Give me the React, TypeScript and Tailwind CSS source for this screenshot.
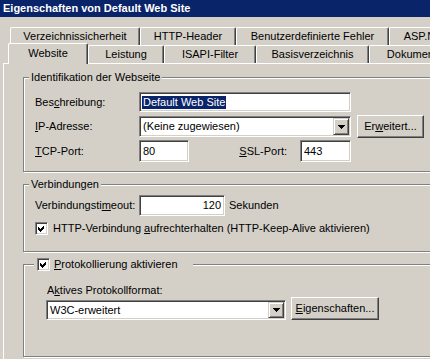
import React from "react";

const sunken =
  "border border-t-[#808080] border-l-[#808080] border-b-white border-r-white shadow-[inset_1px_1px_0_#404040,inset_-1px_-1px_0_#d4d0c8] bg-white";
const raised =
  "border border-t-white border-l-white border-b-[#404040] border-r-[#404040] shadow-[inset_-1px_-1px_0_#808080] bg-[#d4d0c8]";
const group =
  "relative w-[420px] border border-[#808080] shadow-[inset_1px_1px_0_#fff,1px_1px_0_#fff]";

const topRow = [
  { label: "Verzeichnissicherheit", w: "w-[130px]" },
  { label: "HTTP-Header", w: "w-[96px]" },
  { label: "Benutzerdefinierte Fehler", w: "w-[153px]" },
  { label: "ASP.NET", w: "w-[75px]" },
];

const bottomRow = [
  { label: "Leistung", w: "w-[76px]" },
  { label: "ISAPI-Filter", w: "w-[92px]" },
  { label: "Basisverzeichnis", w: "w-[113px]" },
  { label: "Dokumente", w: "w-[92px]" },
];

function Tab({ label, w }: { label: string; w: string }) {
  return (
    <div
      className={`${w} flex h-full shrink-0 items-center justify-center rounded-t-[2px] border-l border-r border-t border-l-white border-r-[#404040] border-t-white bg-[#d4d0c8] shadow-[inset_-1px_0_0_#808080]`}
    >
      {label}
    </div>
  );
}

function Arrow() {
  return (
    <svg width="7" height="4" viewBox="0 0 7 4" shapeRendering="crispEdges">
      <rect x="0" y="0" width="7" height="1" fill="#000" />
      <rect x="1" y="1" width="5" height="1" fill="#000" />
      <rect x="2" y="2" width="3" height="1" fill="#000" />
      <rect x="3" y="3" width="1" height="1" fill="#000" />
    </svg>
  );
}

function Combo({ text, className }: { text: string; className: string }) {
  return (
    <div className={`${sunken} ${className} flex p-[1px]`}>
      <div className="flex flex-1 items-center pl-[2px]">{text}</div>
      <div className="flex w-[16px] items-center justify-center border border-t-[#d4d0c8] border-l-[#d4d0c8] border-b-[#404040] border-r-[#404040] bg-[#d4d0c8] shadow-[inset_1px_1px_0_#fff,inset_-1px_-1px_0_#808080]">
        <Arrow />
      </div>
    </div>
  );
}

function Check() {
  return (
    <div className={`${sunken} h-[13px] w-[13px] shrink-0 p-[1px]`}>
      <svg width="9" height="9" viewBox="0 0 9 9" shapeRendering="crispEdges">
        <path d="M1 3v3l2 2l4-4v-3l-4 4z" fill="#000" />
      </svg>
    </div>
  );
}

export default function App() {
  return (
    <div className="h-[359px] w-[430px] overflow-hidden bg-[#d4d0c8] font-['Liberation_Sans',Arial,sans-serif] text-[11px] leading-[13px] text-black">
      {/* title bar */}
      <div className="h-[17px] bg-[#0a246a] pl-[3px] text-[11px] font-bold leading-[17px] text-white">
        Eigenschaften von Default Web Site
      </div>

      {/* tabs */}
      <div className="mt-[10px] flex h-[18px] pl-[10px]">
        {topRow.map((t) => (
          <Tab key={t.label} {...t} />
        ))}
      </div>
      <div className="flex h-[18px] pl-[10px]">
        <div className="relative z-10 w-[78px] shrink-0">
          <div className="-ml-[2px] -mt-[2px] flex h-[21px] w-[80px] items-start justify-center rounded-t-[2px] border-l border-r border-t border-l-white border-r-[#404040] border-t-white bg-[#d4d0c8] pt-[3px] shadow-[inset_-1px_0_0_#808080]">
            Website
          </div>
        </div>
        {bottomRow.map((t) => (
          <Tab key={t.label} {...t} />
        ))}
      </div>

      {/* panel */}
      <div className="ml-[3px] h-[320px] w-[460px] border-l border-t border-white pl-[19px]">
        {/* Identifikation */}
        <div className={`${group} mt-[13px] h-[95px]`}>
          <span className="absolute left-[5px] top-[-7px] bg-[#d4d0c8] px-[2px]">
            Identifikation der Webseite
          </span>
          <div className="flex flex-col pl-[11px] pt-[14px]">
            <div className="flex h-[20px] items-center">
              <span className="w-[104px]">
                Bes<u>c</u>hreibung:
              </span>
              <div className={`${sunken} flex h-[20px] w-[212px] items-center pl-[2px]`}>
                <span className="bg-[#0a246a] px-[1px] text-white">Default Web Site</span>
              </div>
            </div>
            <div className="mt-[3px] flex h-[23px] items-center">
              <span className="w-[104px]">
                <u>I</u>P-Adresse:
              </span>
              <Combo text="(Keine zugewiesen)" className="h-[21px] w-[212px]" />
              <button className={`${raised} ml-[6px] h-[23px] w-[67px]`}>
                Er<u>w</u>eitert...
              </button>
            </div>
            <div className="mt-[2px] flex h-[22px] items-center">
              <span className="w-[104px]">
                <u>T</u>CP-Port:
              </span>
              <div className={`${sunken} flex h-[22px] w-[50px] items-center pl-[3px]`}>80</div>
              <span className="w-[111px] pr-[13px] text-right">
                <u>S</u>SL-Port:
              </span>
              <div className={`${sunken} flex h-[22px] w-[51px] items-center pl-[3px]`}>443</div>
            </div>
          </div>
        </div>

        {/* Verbindungen */}
        <div className={`${group} mt-[12px] h-[68px]`}>
          <span className="absolute left-[5px] top-[-7px] bg-[#d4d0c8] px-[2px]">Verbindungen</span>
          <div className="flex flex-col pl-[11px] pt-[10px]">
            <div className="flex h-[21px] items-center">
              <span className="w-[104px]">
                Verbindungsti<u>m</u>eout:
              </span>
              <div className={`${sunken} flex h-[21px] w-[86px] items-center justify-end pr-[3px]`}>120</div>
              <span className="ml-[4px]">Sekunden</span>
            </div>
            <div className="mt-[6px] flex h-[13px] items-center">
              <Check />
              <span className="ml-[5px]">
                HTTP-Verbindung <u>a</u>ufrechterhalten (HTTP-Keep-Alive aktivieren)
              </span>
            </div>
          </div>
        </div>

        {/* Protokollierung */}
        <div className={`${group} mt-[12px] h-[93px]`}>
          <div className="absolute left-[10px] top-[-7px] flex h-[13px] w-[159px] items-center bg-[#d4d0c8]">
            <div className="ml-[3px]">
              <Check />
            </div>
            <span className="ml-[4px]">
              <u>P</u>rotokollierung aktivieren
            </span>
          </div>
          <div className="flex flex-col pl-[22px] pt-[19px]">
            <span className="pl-[1px]">
              A<u>k</u>tives Protokollformat:
            </span>
            <div className="flex items-start">
              <Combo text="W3C-erweitert" className="mt-[3px] h-[20px] w-[240px]" />
              <button className={`${raised} ml-[5px] h-[23px] w-[88px]`}>
                <u>E</u>igenschaften...
              </button>
            </div>
          </div>
        </div>
      </div>
    </div>
  );
}
